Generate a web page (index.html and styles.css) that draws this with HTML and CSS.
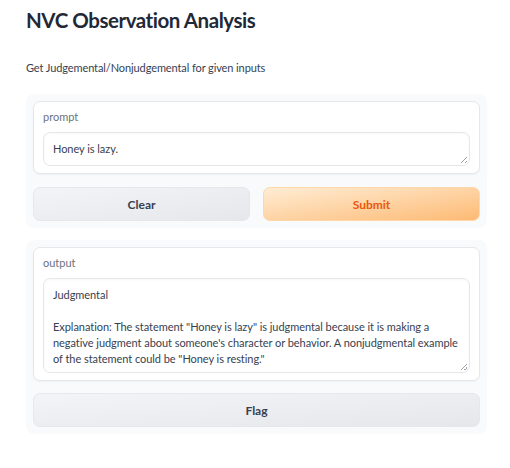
FILE: index.html
```html
<!DOCTYPE html>
<html>
<head>
<meta charset="utf-8">
<link rel="stylesheet" href="styles.css">
</head>
<body>
<div class="app">
  <h1 class="title">NVC Observation Analysis</h1>
  <p class="desc">Get Judgemental/Nonjudgemental for given inputs</p>
  <div class="panel">
    <div class="block">
      <div class="label">prompt</div>
      <div class="textbox short">Honey is lazy.<span class="grip"></span></div>
    </div>
    <div class="btnrow">
      <div class="btn secondary">Clear</div>
      <div class="btn primary">Submit</div>
    </div>
  </div>
  <div class="panel second">
    <div class="block">
      <div class="label">output</div>
      <div class="textbox tall">Judgmental<br><br>Explanation: The statement "Honey is lazy" is judgmental because it is making a negative judgment about someone's character or behavior. A nonjudgmental example of the statement could be "Honey is resting."<span class="grip"></span></div>
    </div>
    <div class="btn secondary full">Flag</div>
  </div>
</div>
</body>
</html>
```
FILE: styles.css
```css
* { box-sizing: border-box; }
html, body { margin: 0; padding: 0; background: #fff; }
body {
  font-family: Lato, "Noto Sans", sans-serif;
  color: #374151;
}
.app {
  padding: 10px 23px 0 26px;
  width: 510px;
}
.title {
  margin: 0;
  font-size: 20.5px;
  font-weight: 700;
  letter-spacing: -0.45px;
  color: #1f2937;
  line-height: 20px;
}
.desc {
  margin: 31px 0 0 0;
  font-size: 11px;
  letter-spacing: -0.1px;
  line-height: 14px;
  color: #374151;
}
.panel {
  margin-top: 19px;
  background: #f9fafb;
  border-radius: 8px;
  padding: 7px;
  display: flex;
  flex-direction: column;
  gap: 13px;
}
.panel.second { margin-top: 12px; gap: 12px; }
.block {
  background: #fff;
  border: 1px solid #e5e7eb;
  border-radius: 7px;
  padding: 8px 9px 7px 9px;
  box-shadow: 0 1px 2px rgba(0,0,0,0.04);
}
.label {
  font-size: 11px;
  line-height: 14px;
  color: #6b7280;
  margin-bottom: 8px;
}
.textbox {
  position: relative;
  border: 1px solid #e5e7eb;
  border-radius: 7px;
  padding: 8px 9px;
  font-size: 11px;
  letter-spacing: -0.05px;
  line-height: 16px;
  color: #374151;
  box-shadow: inset 0 1px 2px rgba(0,0,0,0.03);
}
.textbox.short { height: 34px; }
.textbox.tall { height: 95px; }
.grip {
  position: absolute;
  right: 2px;
  bottom: 2px;
  width: 6px;
  height: 6px;
  background: linear-gradient(135deg, transparent 45%, #9ca3af 45%, #9ca3af 55%, transparent 55%, transparent 75%, #9ca3af 75%, #9ca3af 85%, transparent 85%);
}
.btnrow {
  display: flex;
  gap: 13px;
}
.btn {
  flex: 1;
  height: 34px;
  border-radius: 7px;
  display: flex;
  align-items: center;
  justify-content: center;
  font-size: 12px;
  font-weight: 700;
  border: 1px solid #e5e7eb;
}
.secondary {
  background: linear-gradient(to bottom right, #f3f4f6, #e5e7eb);
  color: #374151;
}
.primary {
  background: linear-gradient(to bottom right, #ffedd5, #fdba74);
  color: #ea580c;
  border-color: #fed7aa;
}
.full { flex: none; }
```
